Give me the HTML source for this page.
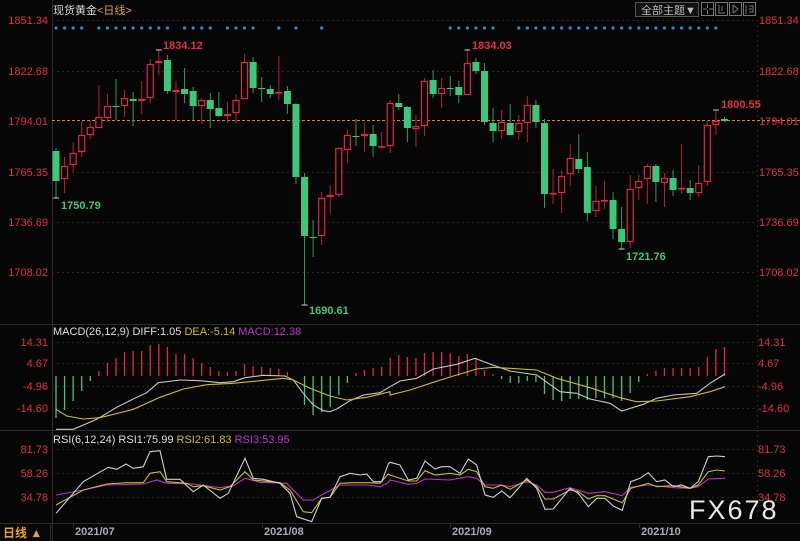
<!DOCTYPE html>
<html><head><meta charset="utf-8"><style>
html,body{margin:0;padding:0;background:#060606;}
body{width:800px;height:541px;overflow:hidden;position:relative;font-family:"Liberation Sans","Noto Sans CJK SC",sans-serif;}
svg{position:absolute;left:0;top:0;}
</style></head><body>
<svg id="s" width="800" height="541" xmlns="http://www.w3.org/2000/svg" font-family="Liberation Sans, Noto Sans CJK SC, sans-serif">
<rect width="800" height="541" fill="#060606"/>
<g stroke="#262626" stroke-dasharray="2,3" stroke-width="1">
<line x1="52" y1="20.5" x2="757" y2="20.5"/><line x1="52" y1="71.5" x2="757" y2="71.5"/>
<line x1="52" y1="172.5" x2="757" y2="172.5"/><line x1="52" y1="222.5" x2="757" y2="222.5"/><line x1="52" y1="272.5" x2="757" y2="272.5"/>
<line x1="52" y1="342.5" x2="757" y2="342.5"/><line x1="52" y1="363.5" x2="757" y2="363.5"/><line x1="52" y1="386.5" x2="757" y2="386.5"/><line x1="52" y1="408.5" x2="757" y2="408.5"/>
<line x1="52" y1="449.5" x2="757" y2="449.5"/><line x1="52" y1="473.5" x2="757" y2="473.5"/><line x1="52" y1="497.5" x2="757" y2="497.5"/>
<line x1="757.5" y1="20" x2="757.5" y2="520"/>
</g>
<g stroke="#2c2c2c" stroke-width="1">
<line x1="52.5" y1="0" x2="52.5" y2="541"/>
<line x1="0" y1="324.5" x2="800" y2="324.5"/>
<line x1="0" y1="430.5" x2="800" y2="430.5"/>
<line x1="0" y1="523.5" x2="800" y2="523.5"/>
<line x1="50.5" y1="523" x2="50.5" y2="541"/>
<line x1="73.5" y1="523" x2="73.5" y2="528"/><line x1="262.5" y1="523" x2="262.5" y2="528"/><line x1="450.5" y1="523" x2="450.5" y2="528"/><line x1="639.5" y1="523" x2="639.5" y2="528"/>
</g>
<line x1="52" y1="120.5" x2="800" y2="120.5" stroke="#e8821e" stroke-dasharray="3,2"/>
<g id="c"></g>
<text x="53" y="14" font-size="11" fill="#d8d8d8">现货黄金</text>
<text x="97" y="14" font-size="11" fill="#d9a63a">&lt;日线&gt;</text>
<rect x="635.5" y="2.5" width="63" height="14" fill="#101010" stroke="#555"/>
<text x="641" y="14" font-size="11" fill="#bbb">全部主题▼</text>
<g stroke="#777" fill="none">
<rect x="701.5" y="2.5" width="12" height="13"/><rect x="715.5" y="2.5" width="12" height="13"/><rect x="729.5" y="2.5" width="12" height="13"/><rect x="743.5" y="2.5" width="12" height="13"/>
<path d="M707.5 4v4M707.5 10v4M703 9h4M709 9h4M719 5v8h6M722 6v5M733 5v8M733 13l5-4-5-4M746 5v9M749 6h4v6h-4M752 9h-3"/>
</g>
<g font-size="11" fill="#e0304a">
<text x="759" y="24">1851.34</text><text x="759" y="75">1822.68</text><text x="759" y="125">1794.01</text>
<text x="759" y="176">1765.35</text><text x="759" y="226">1736.69</text><text x="759" y="276">1708.02</text>
<text x="758" y="346">14.31</text><text x="758" y="367">4.67</text><text x="758" y="390">-4.96</text><text x="758" y="412">-14.60</text>
<text x="758" y="453">81.73</text><text x="758" y="477">58.26</text><text x="758" y="501">34.78</text>
</g>
<g font-size="11" fill="#e0304a" text-anchor="end">
<text x="48" y="24">1851.34</text><text x="48" y="75">1822.68</text><text x="48" y="125">1794.01</text>
<text x="48" y="176">1765.35</text><text x="48" y="226">1736.69</text><text x="48" y="276">1708.02</text>
<text x="48" y="346">14.31</text><text x="48" y="367">4.67</text><text x="48" y="390">-4.96</text><text x="48" y="412">-14.60</text>
<text x="48" y="453">81.73</text><text x="48" y="477">58.26</text><text x="48" y="501">34.78</text>
</g>
<g font-size="11" font-weight="bold">
<text x="163" y="49" fill="#e0304a">1834.12</text>
<text x="472" y="49" fill="#e0304a">1834.03</text>
<text x="721" y="108" fill="#e0304a">1800.55</text>
<text x="61" y="209" fill="#3cc87a">1750.79</text>
<text x="309" y="314" fill="#3cc87a">1690.61</text>
<text x="626" y="260" fill="#3cc87a">1721.76</text>
</g>
<text x="53" y="335" font-size="11"><tspan fill="#ddd">MACD(26,12,9) DIFF:1.05 </tspan><tspan fill="#c8c020">DEA:-5.14 </tspan><tspan fill="#c030d0">MACD:12.38</tspan></text>
<text x="53" y="443" font-size="11"><tspan fill="#ddd">RSI(6,12,24) RSI1:75.99 </tspan><tspan fill="#c8c020">RSI2:61.83 </tspan><tspan fill="#c030d0">RSI3:53.95</tspan></text>
<text x="3" y="537" font-size="12" font-weight="bold" fill="#e8a030">日线 ▲</text>
<g font-size="11" font-weight="bold" fill="#aab">
<text x="75" y="535">2021/07</text><text x="264" y="535">2021/08</text><text x="452" y="535">2021/09</text><text x="641" y="535">2021/10</text>
</g>
<text x="689" y="519" font-size="27" fill="#e8e8e8" letter-spacing="2">FX678</text>
</svg>
<script>
var NS="http://www.w3.org/2000/svg",G=document.getElementById("c");
function el(t,a){var e=document.createElementNS(NS,t);for(var k in a)e.setAttribute(k,a[k]);G.appendChild(e);return e;}
function X(i){return 56+8.57*i;}
var R="#e0264a",GR="#3cc87a";
var C=[[148,151,181,198,'g'],[157,166,179,193,'r'],[142,153,165,172,'r'],[121,135,152,157,'r'],[121,127,135,139,'r'],[85,117,128,128,'r'],[94,106,118,122,'r'],[79,106,106,120,'g'],[90,98,106,117,'r'],[92,99,101,126,'g'],
[81,99,101,114,'r'],[59,64,98,103,'r'],[50,61,63,75,'r'],[55,60,91,94,'g'],[81,90,92,120,'r'],[68,89,94,103,'g'],[87,91,106,120,'g'],[98,100,106,124,'r'],[93,100,109,128,'g'],[92,108,116,117,'g'],
[102,114,116,123,'r'],[94,100,113,124,'r'],[54,62,99,99,'r'],[57,62,88,93,'g'],[77,88,88,102,'g'],[85,89,94,98,'g'],[56,92,93,100,'r'],[86,91,104,114,'g'],[103,104,177,184,'g'],[173,177,236,305,'g'],
[220,237,237,257,'g'],[192,198,236,245,'r'],[185,195,197,214,'r'],[147,148,195,197,'r'],[130,135,150,163,'r'],[119,136,136,146,'g'],[123,134,136,152,'r'],[125,134,146,157,'g'],[132,146,147,149,'r'],[100,103,146,153,'r'],
[94,103,107,110,'g'],[106,107,128,142,'g'],[115,126,129,147,'r'],[78,81,126,136,'r'],[70,80,94,98,'g'],[78,88,94,108,'r'],[76,88,88,96,'g'],[81,87,95,103,'g'],[50,63,95,95,'r'],[58,62,71,74,'g'],
[63,71,122,125,'g'],[108,123,131,142,'g'],[110,122,131,139,'r'],[104,123,135,135,'g'],[115,123,132,140,'r'],[96,105,123,142,'r'],[100,105,122,128,'g'],[119,123,194,208,'g'],[169,193,193,204,'r'],[170,176,193,213,'r'],
[144,158,174,186,'r'],[134,159,169,173,'g'],[152,167,213,221,'g'],[186,201,211,217,'r'],[181,200,200,209,'r'],[192,200,229,239,'g'],[207,229,242,249,'g'],[175,189,242,248,'r'],[175,181,188,200,'r'],[164,166,179,204,'r'],
[164,166,182,202,'g'],[173,178,183,207,'r'],[170,178,190,196,'g'],[144,188,188,194,'r'],[180,188,193,200,'g'],[165,183,193,197,'r'],[120,125,182,186,'r'],[110,121,125,135,'r'],[117,119,121,122,'g']];
C.forEach(function(c,i){var x=X(i),col=c[4]=='g'?GR:R;
 el('line',{x1:x,x2:x,y1:c[0],y2:c[3],stroke:c[4]=='g'?'#2f9a5e':'#b0203c','stroke-width':1});
 var h=Math.max(1,c[2]-c[1]);
 if(c[4]=='g')el('rect',{x:x-3.5,y:c[1],width:7,height:h,fill:GR});
 else el('rect',{x:x-3,y:c[1]+0.5,width:6,height:Math.max(0.5,h-1),fill:'#060606',stroke:R,'stroke-width':1.2});
});
[[X(0),198],[X(12),50],[X(29),305],[X(48),50],[X(66),249],[X(77),110]].forEach(function(p){el('line',{x1:p[0]-3,x2:p[0]+3,y1:p[1],y2:p[1],stroke:'#ccc'});});
var D=[0,1,2,3,5,6,7,8,9,10,11,12,13,15,16,17,18,20,21,22,23,26,28,31,46,47,48,49,50,51];for(var i=54;i<=77;i++)D.push(i);
D.forEach(function(i){el('circle',{cx:X(i),cy:28,r:1.6,fill:'#1e8ee0'});});
var H=[418,410,401,391,381,371,363,358,352,351,351,345,344,347,354,354,358,363,367,371,372,371,364,366,367,368,369,372,376,405,415,412,407,395,383,373,370,368,367,358,355,357,358,353,352,352,353,356,354,358,370,374,379,383,383,381,382,394,400,401,399,399,400,398,398,398,401,393,382,374,371,368,368,368,368,367,357,349,347];
H.forEach(function(y,i){var x=X(i);if(Math.abs(y-376)<1)return;el('line',{x1:x,x2:x,y1:376,y2:y,stroke:y>376?'#3cc87a':'#e0264a','stroke-width':1.3});});
function poly(a,b,col){var p=[];a.forEach(function(q){p.push((q[0]/3).toFixed(1)+','+(320+q[1]/3).toFixed(1));});
 b.forEach(function(q){p.push((390+q[0]/3).toFixed(1)+','+(325+q[1]/3).toFixed(1));});
 el('polyline',{points:p.join(' '),fill:'none',stroke:col,'stroke-width':1.1});}
poly([[168,328],[220,328],[290,298],[350,262],[400,237],[440,218],[475,188],[540,180],[600,182],[660,188],[700,185],[735,173],[790,166],[855,168],[880,180],[910,220],[940,255],[970,272],[990,275],[1010,267],[1050,242],[1090,225],[1140,218]],
 [[0,185],[30,168],[80,160],[130,132],[200,118],[255,100],[300,117],[360,138],[440,150],[510,200],[560,205],[600,222],[660,235],[695,258],[760,238],[800,220],[850,210],[920,205],[960,175],[1005,147]],'#c8c8c8');
poly([[168,268],[200,288],[250,297],[300,293],[400,268],[480,232],[550,207],[620,194],[700,190],[780,182],[850,175],[880,180],[930,205],[990,228],[1040,240],[1100,232],[1170,215]],
 [[0,210],[60,195],[130,172],[200,150],[260,132],[310,127],[440,135],[500,160],[600,188],[690,218],[740,230],[800,228],[900,215],[960,200],[1005,185]],'#c8c020');
poly([[168,525],[250,510],[320,495],[430,492],[470,480],[500,490],[580,492],[660,503],[700,497],[735,475],[780,487],[860,490],[910,540],[940,540],[970,522],[1020,495],[1100,495],[1140,500],[1165,488]],
 [[0,465],[55,478],[80,475],[105,462],[180,465],[235,455],[260,460],[285,480],[335,480],[360,485],[410,470],[440,480],[465,502],[490,502],[540,488],[595,505],[645,500],[697,512],[722,487],[775,480],[850,488],[900,490],[925,485],[955,462],[1005,460]],'#c030d0');
poly([[168,555],[250,510],[320,492],[380,488],[430,488],[450,460],[480,455],[500,485],[560,490],[580,500],[610,497],[660,510],[690,500],[735,455],[760,480],[840,488],[870,510],[910,575],[935,578],[965,535],[990,532],[1020,490],[1060,488],[1100,488],[1140,490],[1165,462]],
 [[0,450],[55,468],[80,468],[105,437],[135,450],[180,445],[210,450],[235,433],[260,440],[285,485],[310,490],[335,480],[360,493],[410,465],[440,485],[465,522],[490,522],[540,495],[565,500],[595,522],[620,512],[645,512],[697,533],[722,490],[775,475],[800,485],[850,482],[900,490],[925,480],[955,440],[980,435],[1005,438]],'#c8c020');
poly([[168,580],[250,485],[325,442],[350,448],[378,432],[400,445],[430,440],[450,395],[480,392],[500,478],[540,478],[580,515],[610,495],[660,535],[685,520],[735,415],[760,475],[790,478],[840,490],[870,520],[890,590],[935,605],[965,535],[990,532],[1020,470],[1050,460],[1080,465],[1100,462],[1120,485],[1145,485],[1165,432]],
 [[0,412],[30,420],[55,465],[80,460],[105,408],[135,432],[155,425],[180,425],[210,445],[235,402],[260,420],[285,510],[310,517],[335,498],[360,518],[385,490],[410,460],[440,490],[465,553],[490,552],[540,490],[565,505],[595,545],[620,520],[645,520],[670,543],[697,556],[722,470],[750,460],[775,443],[800,470],[825,465],[850,485],[875,480],[900,490],[925,470],[955,395],[980,393],[1005,395]],'#d0d0d0');
</script>
</body></html>
